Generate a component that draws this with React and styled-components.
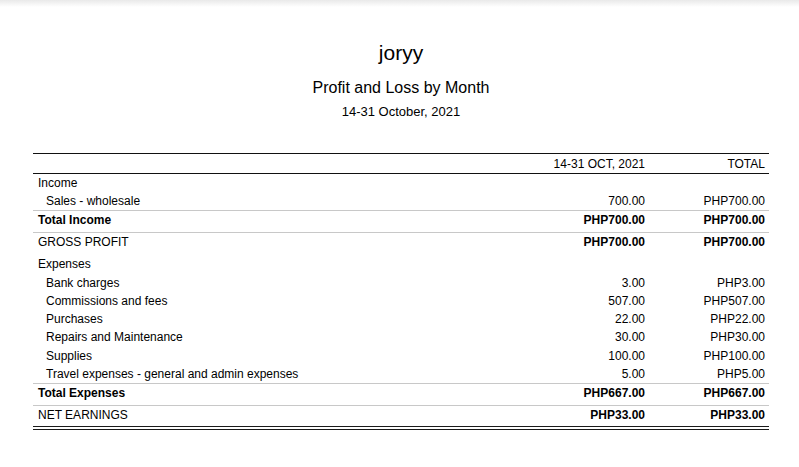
import styled, { createGlobalStyle } from "styled-components";

const GlobalStyle = createGlobalStyle`
  * { box-sizing: border-box; }
  body {
    margin: 0;
    background: linear-gradient(#e9e9e9 0, #ffffff 7px) no-repeat, #ffffff;
    font-family: "Liberation Sans", Arial, sans-serif;
    color: #000;
  }
`;

const incomeRows = [{ name: "Sales - wholesale", month: "700.00", total: "PHP700.00" }];

const expenseRows = [
  { name: "Bank charges", month: "3.00", total: "PHP3.00" },
  { name: "Commissions and fees", month: "507.00", total: "PHP507.00" },
  { name: "Purchases", month: "22.00", total: "PHP22.00" },
  { name: "Repairs and Maintenance", month: "30.00", total: "PHP30.00" },
  { name: "Supplies", month: "100.00", total: "PHP100.00" },
  { name: "Travel expenses - general and admin expenses", month: "5.00", total: "PHP5.00" },
];

function App() {
  return (
    <>
      <GlobalStyle />
      <Page>
        <Header>
          <Company>joryy</Company>
          <ReportTitle>Profit and Loss by Month</ReportTitle>
          <Period>14-31 October, 2021</Period>
        </Header>
        <Report>
          <thead>
            <tr>
              <HeadCell></HeadCell>
              <HeadCell $num>14-31 OCT, 2021</HeadCell>
              <HeadCell $num>TOTAL</HeadCell>
            </tr>
          </thead>
          <tbody>
            <Row>
              <Cell>Income</Cell>
              <Cell />
              <Cell />
            </Row>
            {incomeRows.map((r) => (
              <Row key={r.name}>
                <Cell $indent>{r.name}</Cell>
                <Cell $num>{r.month}</Cell>
                <Cell $num>{r.total}</Cell>
              </Row>
            ))}
            <Row $line>
              <Cell $bold>Total Income</Cell>
              <Cell $num $bold>PHP700.00</Cell>
              <Cell $num $bold>PHP700.00</Cell>
            </Row>
            <Row $line>
              <Cell>GROSS PROFIT</Cell>
              <Cell $num $bold>PHP700.00</Cell>
              <Cell $num $bold>PHP700.00</Cell>
            </Row>
            <Row>
              <Cell>Expenses</Cell>
              <Cell />
              <Cell />
            </Row>
            {expenseRows.map((r) => (
              <Row key={r.name}>
                <Cell $indent>{r.name}</Cell>
                <Cell $num>{r.month}</Cell>
                <Cell $num>{r.total}</Cell>
              </Row>
            ))}
            <Row $line>
              <Cell $bold>Total Expenses</Cell>
              <Cell $num $bold>PHP667.00</Cell>
              <Cell $num $bold>PHP667.00</Cell>
            </Row>
            <Row $line>
              <Cell>NET EARNINGS</Cell>
              <Cell $num $bold>PHP33.00</Cell>
              <Cell $num $bold>PHP33.00</Cell>
            </Row>
          </tbody>
        </Report>
      </Page>
    </>
  );
}

const Page = styled.div`
  padding: 40px 30px 40px 33px;
`;

const Header = styled.div`
  display: flex;
  flex-direction: column;
  align-items: center;
  margin-bottom: 33px;
`;

const Company = styled.div`
  font-size: 21px;
  line-height: 26px;
`;

const ReportTitle = styled.div`
  font-size: 16px;
  line-height: 20px;
  margin-top: 12px;
`;

const Period = styled.div`
  font-size: 13px;
  line-height: 16px;
  margin-top: 6px;
`;

const Report = styled.table`
  width: 100%;
  border-collapse: collapse;
  font-size: 12px;
  border-bottom: 4px double #1a1a1a;
`;

const HeadCell = styled.th`
  font-weight: normal;
  height: 20px;
  padding: 0 4px;
  text-align: ${(p) => (p.$num ? "right" : "left")};
  border-top: 1px solid #111;
  border-bottom: 1px solid #111;
  width: ${(p) => (p.$num ? "120px" : "auto")};
`;

const Row = styled.tr`
  border-top: ${(p) => (p.$line ? "1px solid #c8c8c8" : "none")};
  height: ${(p) => (p.$line ? "22.5px" : "18.3px")};
  td {
    vertical-align: ${(p) => (p.$line ? "top" : "middle")};
    padding-top: ${(p) => (p.$line ? "2px" : "0")};
  }
`;

const Cell = styled.td`
  padding: 0 4px 0 ${(p) => (p.$indent ? "13px" : "5px")};
  text-align: ${(p) => (p.$num ? "right" : "left")};
  font-weight: ${(p) => (p.$bold ? "bold" : "normal")};
  white-space: nowrap;
`;

export default App;
